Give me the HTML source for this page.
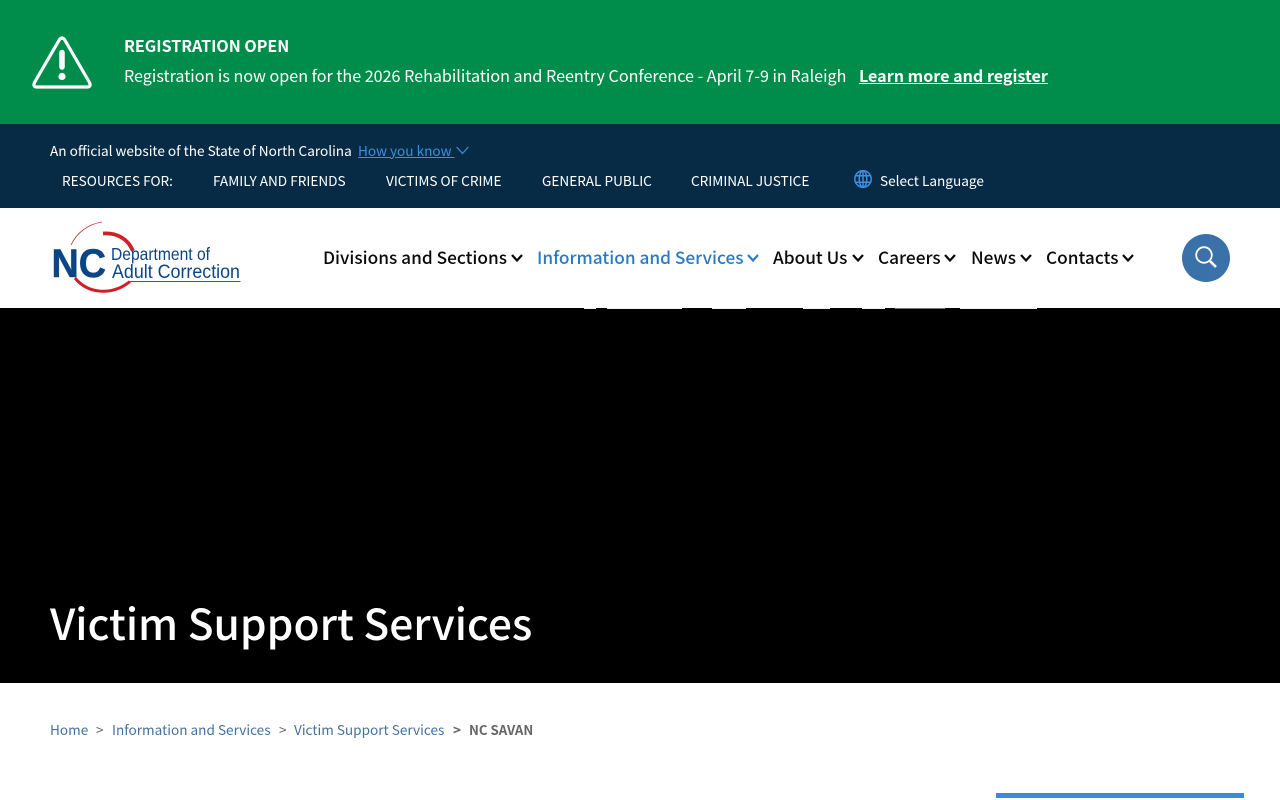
<!DOCTYPE html>
<html lang="en"><head><meta charset="utf-8"><title>NC SAVAN</title>
<style>
html,body{margin:0;padding:0;width:1280px;height:800px;overflow:hidden;background:#fff}
body{position:relative;font-family:"Noto Sans CJK JP","Liberation Sans",sans-serif}
.a{position:absolute;white-space:nowrap;line-height:20px}
.bar{position:absolute;left:0;width:1280px}
.nav{font-size:17.250px;font-weight:500;color:#0a0a0a;top:247px}
.top{font-size:13.600px;color:#fff;top:170px}
.bc{font-size:13.600px;color:#47709c;top:719px}
.s{position:absolute;top:308px;height:1px;background:#eee}
svg{position:absolute;overflow:visible}
</style></head><body>
<div class="bar" style="top:0;height:124px;background:#008c4a"></div>
<div class="bar" style="top:124px;height:84px;background:#082b45"></div>
<div class="bar" style="top:308px;height:375px;background:#000"></div>

<svg style="left:32px;top:36px" width="60" height="53" viewBox="0 0 60 53" fill="none">
<path d="M27.500 3.500 Q30 .5 32.500 3.500 L57.500 46.500 Q59.500 51 55 51 H5 Q.5 51 2.500 46.500 Z" stroke="#fff" stroke-width="3.200" stroke-linejoin="round"/>
<path d="M30 16.500 V31" stroke="#fff" stroke-width="5.500" stroke-linecap="round"/>
<circle cx="30" cy="40.500" r="3.600" fill="#fff"/>
</svg>
<div class="a" style="left:124px;top:35px;font-size:16.050px;font-weight:700;color:#fff">REGISTRATION OPEN</div>
<div class="a" style="left:124px;top:65px;font-size:16.130px;color:#fff">Registration is now open for the 2026 Rehabilitation and Reentry Conference - April 7-9 in Raleigh</div>
<div class="a" style="left:859px;top:65px;font-size:16.100px;font-weight:700;color:#fff;text-decoration:underline">Learn more and register</div>

<div class="a" style="left:50px;top:140px;font-size:13.600px;color:#fff">An official website of the State of North Carolina</div>
<div class="a" style="left:358px;top:140px;font-size:13.600px;color:#3d8fe0;text-decoration:underline">How you know&nbsp;</div>
<svg style="left:456px;top:146px" width="13" height="9" viewBox="0 0 13 9" fill="none"><path d="M.7 1 L6.500 7.500 L12.300 1" stroke="#3d8fe0" stroke-width="1.200"/></svg>

<div class="a top" style="left:62px">RESOURCES FOR:</div>
<div class="a top" style="left:213px">FAMILY AND FRIENDS</div>
<div class="a top" style="left:386px">VICTIMS OF CRIME</div>
<div class="a top" style="left:542px">GENERAL PUBLIC</div>
<div class="a top" style="left:691px">CRIMINAL JUSTICE</div>
<svg style="left:854px;top:170px" width="18" height="18" viewBox="0 0 18 18" fill="none" stroke="#3d8fe0" stroke-width="1.500">
<circle cx="9" cy="9" r="8.200"/><ellipse cx="9" cy="9" rx="3.800" ry="8.200"/><path d="M9 .8V17.200M1.600 5.800H16.400M1.600 12.200H16.400"/></svg>
<div class="a top" style="left:880px">Select Language</div>

<svg style="left:50px;top:218px" width="195" height="78" viewBox="0 0 195 78" fill="none">
<path d="M21 27 C27 14 39 6 52 4" stroke="#c9323a" stroke-width=".8"/>
<path d="M53 15.500 C67 14.500 78 21 83 33" stroke="#cf2027" stroke-width="3.800"/>
<path d="M25 60 C38 76 62 78 80 63.500" stroke="#cf2027" stroke-width="3"/>
<path d="M80 63.500 H190.500" stroke="#cf2027" stroke-width="1"/>
<text x="1.500" y="59" font-family="Liberation Sans,sans-serif" font-weight="700" font-size="40" fill="#0b4583" stroke="#0b4583" stroke-width=".5" textLength="54.500" lengthAdjust="spacingAndGlyphs">NC</text>
<text x="61" y="42" font-family="Liberation Sans,sans-serif" font-size="17.500" fill="#0b4583" textLength="99" lengthAdjust="spacingAndGlyphs">Department of</text>
<text x="62" y="60" font-family="Liberation Sans,sans-serif" font-size="19.500" fill="#0b4583" textLength="128" lengthAdjust="spacingAndGlyphs">Adult Correction</text>
</svg>

<div class="a nav" style="left:323px">Divisions and Sections</div>
<div class="a nav" style="left:537px;color:#2b7ac4">Information and Services</div>
<div class="a nav" style="left:773px">About Us</div>
<div class="a nav" style="left:878px">Careers</div>
<div class="a nav" style="left:971px">News</div>
<div class="a nav" style="left:1046px">Contacts</div>
<svg style="left:0;top:0" width="1280" height="300" fill="none" stroke="#0a0a0a" stroke-width="2.200">
<path d="M512 255 L517 260.500 L522 255M853 255 L858 260.500 L863 255M945 255 L950 260.500 L955 255M1021 255 L1026 260.500 L1031 255M1123 255 L1128 260.500 L1133 255"/>
<path d="M748 255 L753 260.500 L758 255" stroke="#2b7ac4"/>
</svg>

<div style="position:absolute;left:1182px;top:234px;width:48px;height:48px;border-radius:50%;background:#3a71a8"></div>
<svg style="left:1194px;top:245px" width="24" height="24" viewBox="0 0 24 24" fill="none" stroke="#fff">
<circle cx="10" cy="10" r="7.800" stroke-width="1.800"/><path d="M15.800 15.800 L22 22" stroke-width="2.600"/></svg>

<div class="s" style="left:584px;width:12px"></div>
<div class="s" style="left:607px;width:75px"></div>
<div class="s" style="left:712px;width:34px"></div>
<div class="s" style="left:803px;width:27px"></div>
<div class="s" style="left:862px;width:23px"></div>
<div class="s" style="left:895px;width:50px;background:#777"></div>
<div class="s" style="left:960px;width:77px"></div>

<div class="a" style="left:50px;top:593px;line-height:60px;font-size:42.500px;font-weight:500;color:#fff">Victim Support Services</div>

<div class="a bc" style="left:50px">Home</div>
<div class="a bc" style="left:96px;color:#666">&gt;</div>
<div class="a bc" style="left:112px">Information and Services</div>
<div class="a bc" style="left:279px;color:#666">&gt;</div>
<div class="a bc" style="left:294px">Victim Support Services</div>
<div class="a bc" style="left:453px;color:#666;font-weight:700">&gt;</div>
<div class="a bc" style="left:469px;color:#666;font-weight:700;font-size:13.200px;top:720px">NC SAVAN</div>

<div style="position:absolute;left:996px;top:793px;width:248px;height:5px;background:#3a8ad8"></div>
</body></html>
